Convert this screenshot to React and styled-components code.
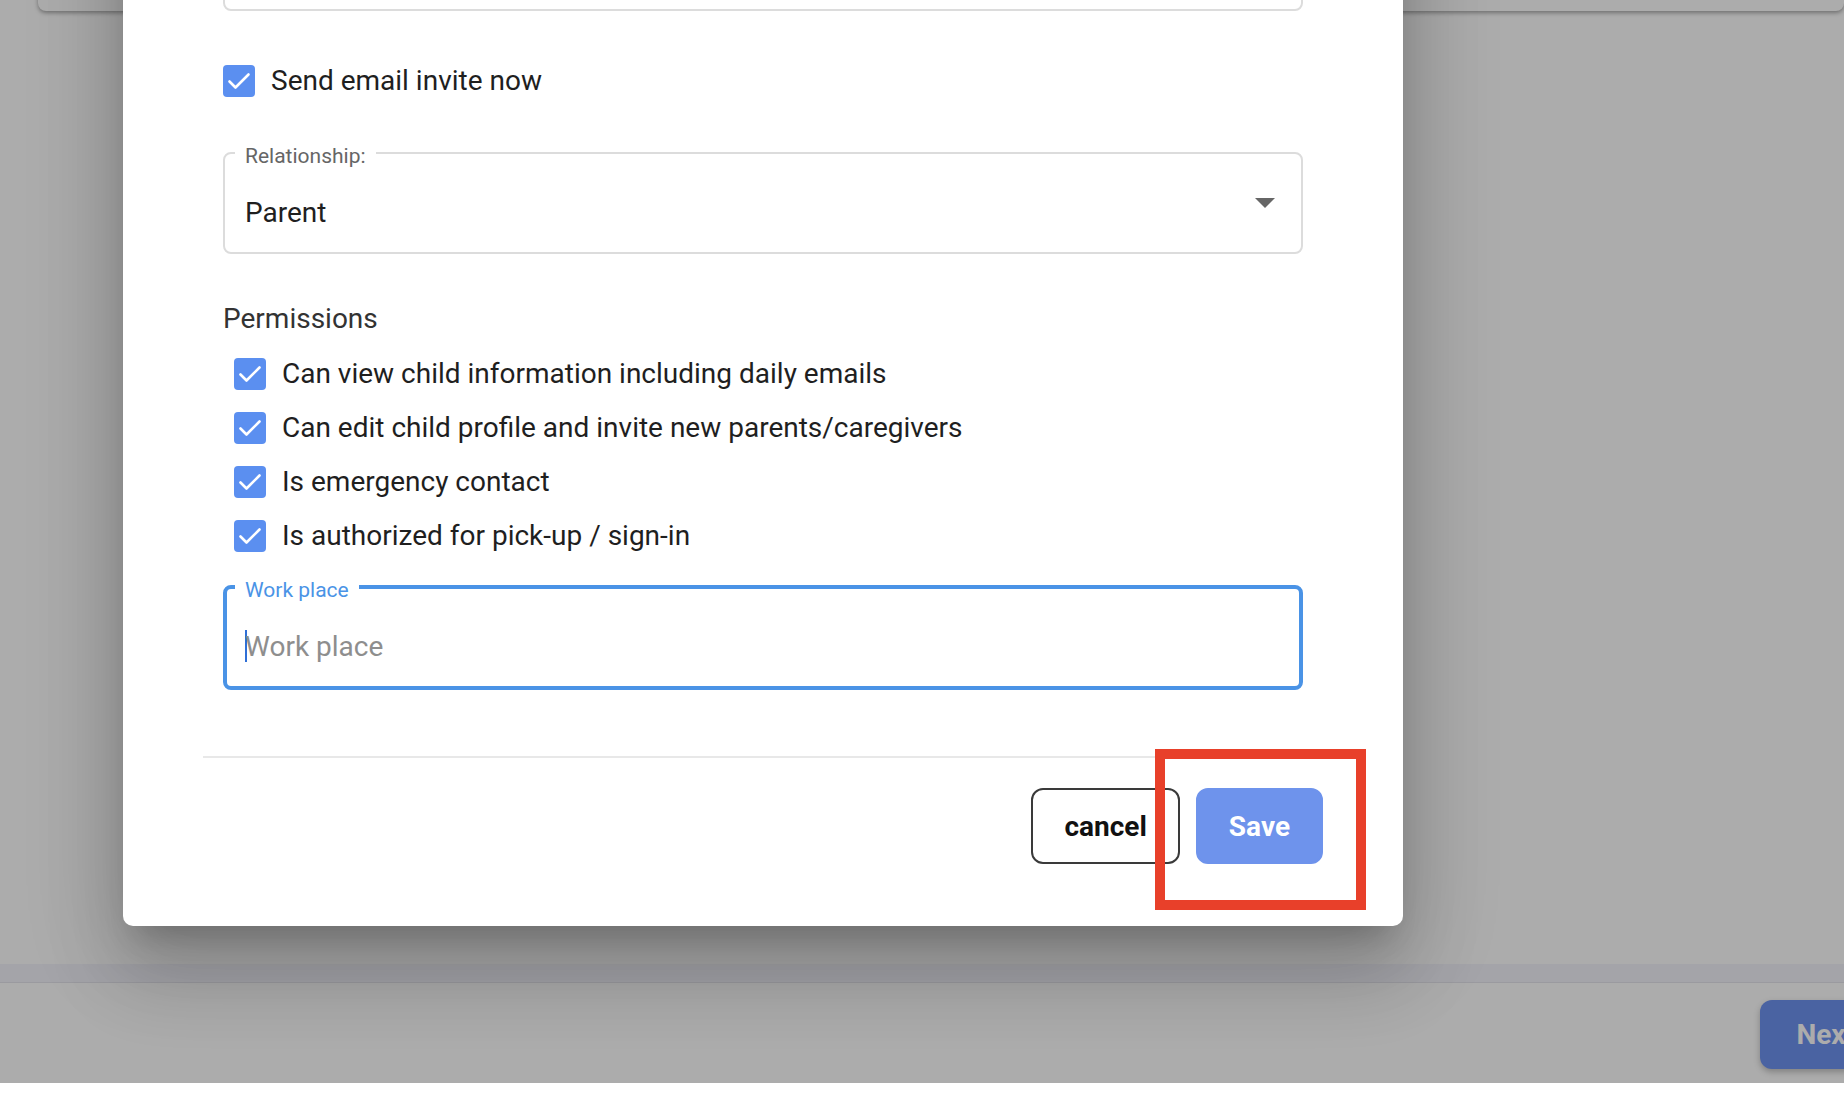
import React from "react";
import styled, { createGlobalStyle } from "styled-components";

const permissions = [
    "Can view child information including daily emails",
    "Can edit child profile and invite new parents/caregivers",
    "Is emergency contact",
    "Is authorized for pick-up / sign-in",
];

const CheckIcon = () => (
    <svg width="32" height="32" viewBox="0 0 32 32">
        <rect width="32" height="32" rx="4" fill="#5b8ff0" />
        <path
            d="M6.5 16.5 L12.5 22.5 L25.5 9.5"
            fill="none"
            stroke="#fff"
            strokeWidth="2.6"
            strokeLinecap="round"
            strokeLinejoin="round"
        />
    </svg>
);

const App = () => {
    return (
        <>
            <GlobalStyle />
            <Page>
                <TopCard />
                <Spacer />
                <Band />
                <Footer>
                    <NextButton>Next</NextButton>
                </Footer>

                <Overlay>
                    <Modal>
                        <Field>
                            <InputArea />
                        </Field>

                        <CheckRow $gap={16}>
                            <CheckIcon />
                            <span>Send email invite now</span>
                        </CheckRow>

                        <Field $spaced={41}>
                            <Legend>Relationship:</Legend>
                            <InputArea>
                                <Value>Parent</Value>
                                <Arrow width="20" height="10" viewBox="0 0 20 10">
                                    <path d="M0 0 H20 L10 10 Z" fill="#666" />
                                </Arrow>
                            </InputArea>
                        </Field>

                        <Heading>Permissions</Heading>
                        <PermissionList>
                            {permissions.map((text) => (
                                <CheckRow key={text} $gap={16}>
                                    <CheckIcon />
                                    <span>{text}</span>
                                </CheckRow>
                            ))}
                        </PermissionList>

                        <Field $spaced={20} $focused>
                            <Legend $focused>Work place</Legend>
                            <InputArea>
                                <Caret />
                                <TextInput placeholder="Work place" />
                            </InputArea>
                        </Field>

                        <Actions>
                            <CancelButton>cancel</CancelButton>
                            <SaveButton>Save</SaveButton>
                        </Actions>
                    </Modal>
                </Overlay>

                <Highlight />
            </Page>
        </>
    );
};
export default App;

const GlobalStyle = createGlobalStyle`
    html, body {
        margin: 0;
        padding: 0;
        background: #fff;
        overflow: hidden;
    }
    * {
        box-sizing: border-box;
    }
    body {
        font-family: Roboto, "Liberation Sans", Arial, sans-serif;
    }
`;

const Page = styled.div`
    position: relative;
    width: 1844px;
    height: 1083px;
    overflow: hidden;
    background: #fff;
    display: flex;
    flex-direction: column;
`;

const TopCard = styled.div`
    height: 40px;
    margin: -29px 0 0 38px;
    background: #fff;
    border-radius: 0 0 8px 8px;
    box-shadow: 0 2px 4px rgba(0, 0, 0, 0.35);
`;

const Spacer = styled.div`
    flex: 1;
`;

const Band = styled.div`
    height: 19px;
    background: #f3f4fb;
    border-bottom: 1px solid #e4e5ec;
`;

const Footer = styled.div`
    height: 100px;
    display: flex;
    justify-content: flex-end;
    padding-top: 17px;
`;

const NextButton = styled.button`
    height: 69px;
    padding: 0 36px;
    margin-right: -47px;
    border: none;
    border-radius: 12px;
    background: #6e93f1;
    color: #fff;
    font-family: Roboto, sans-serif;
    font-size: 28px;
    font-weight: 700;
    box-shadow: 0 3px 6px rgba(0, 0, 0, 0.25);
`;

const Overlay = styled.div`
    position: absolute;
    top: 0;
    left: 0;
    right: 0;
    height: 1083px;
    background: rgba(0, 0, 0, 0.325);
    padding-left: 123px;
`;

const Modal = styled.div`
    width: 1280px;
    margin-top: -142px;
    padding: 62px 100px 0;
    background: #fff;
    border-radius: 10px;
    box-shadow: 0 22px 30px -14px rgba(0, 0, 0, 0.2),
        0 48px 76px 6px rgba(0, 0, 0, 0.14),
        0 18px 92px 16px rgba(0, 0, 0, 0.12);
    display: flex;
    flex-direction: column;
`;

const Field = styled.fieldset`
    margin: ${(p) => (p.$spaced ? `${p.$spaced}px` : 0)} 0 0;
    padding: 0 ${(p) => (p.$focused ? "8px" : "10px")};
    min-width: 0;
    border: ${(p) => (p.$focused ? "4px solid #4a93e6" : "2px solid #dcdcdc")};
    border-radius: 8px;
`;

const Legend = styled.legend`
    padding: 6px 10px 0;
    font-size: 21px;
    line-height: 24px;
    color: ${(p) => (p.$focused ? "#4a93e6" : "#666")};

    & + div {
        height: 84px;
        padding-top: 4px;
    }
`;

const InputArea = styled.div`
    height: 87px;
    padding: 7px 0 0 10px;
    display: flex;
    align-items: center;
    justify-content: space-between;
`;

const Value = styled.span`
    font-size: 28px;
    color: #1f1f1f;
`;

const Arrow = styled.svg`
    margin: 0 16px 18px 0;
`;

const Caret = styled.span`
    width: 2px;
    height: 32px;
    background: #2f6fd6;
    flex: none;
`;

const TextInput = styled.input`
    flex: 1;
    margin-left: -2px;
    border: none;
    outline: none;
    padding: 0;
    background: transparent;
    font-family: Roboto, sans-serif;
    font-size: 28px;
    color: #1f1f1f;

    &::placeholder {
        color: #8e8e8e;
    }
`;

const CheckRow = styled.div`
    display: flex;
    align-items: center;
    gap: ${(p) => p.$gap}px;
    height: 32px;
    font-size: 28px;
    line-height: 32px;
    color: #1f1f1f;

    &:first-of-type {
        margin-top: 54px;
    }
`;

const Heading = styled.div`
    margin-top: 48px;
    font-size: 28px;
    line-height: 34px;
    color: #333;
`;

const PermissionList = styled.div`
    margin-top: 22px;
    padding-left: 11px;
    display: flex;
    flex-direction: column;
    gap: 22px;

    ${CheckRow} {
        margin-top: 0;
    }
`;

const Actions = styled.div`
    margin: 66px -20px 0;
    padding: 30px 0 62px;
    border-top: 2px solid #e8e8e8;
    display: flex;
    justify-content: flex-end;
    gap: 16px;
`;

const BaseButton = styled.button`
    height: 76px;
    padding: 0 31px;
    border-radius: 12px;
    font-family: Roboto, sans-serif;
    font-size: 28px;
    font-weight: 700;
    cursor: pointer;
`;

const CancelButton = styled(BaseButton)`
    background: #fff;
    color: #111;
    border: 2px solid #3a3a3a;
`;

const SaveButton = styled(BaseButton)`
    background: #6e93ec;
    color: #fff;
    border: 2px solid #6e93ec;
`;

const Highlight = styled.div`
    position: absolute;
    left: 1155px;
    top: 749px;
    width: 211px;
    height: 161px;
    border: 10px solid #e8402a;
    pointer-events: none;
`;
